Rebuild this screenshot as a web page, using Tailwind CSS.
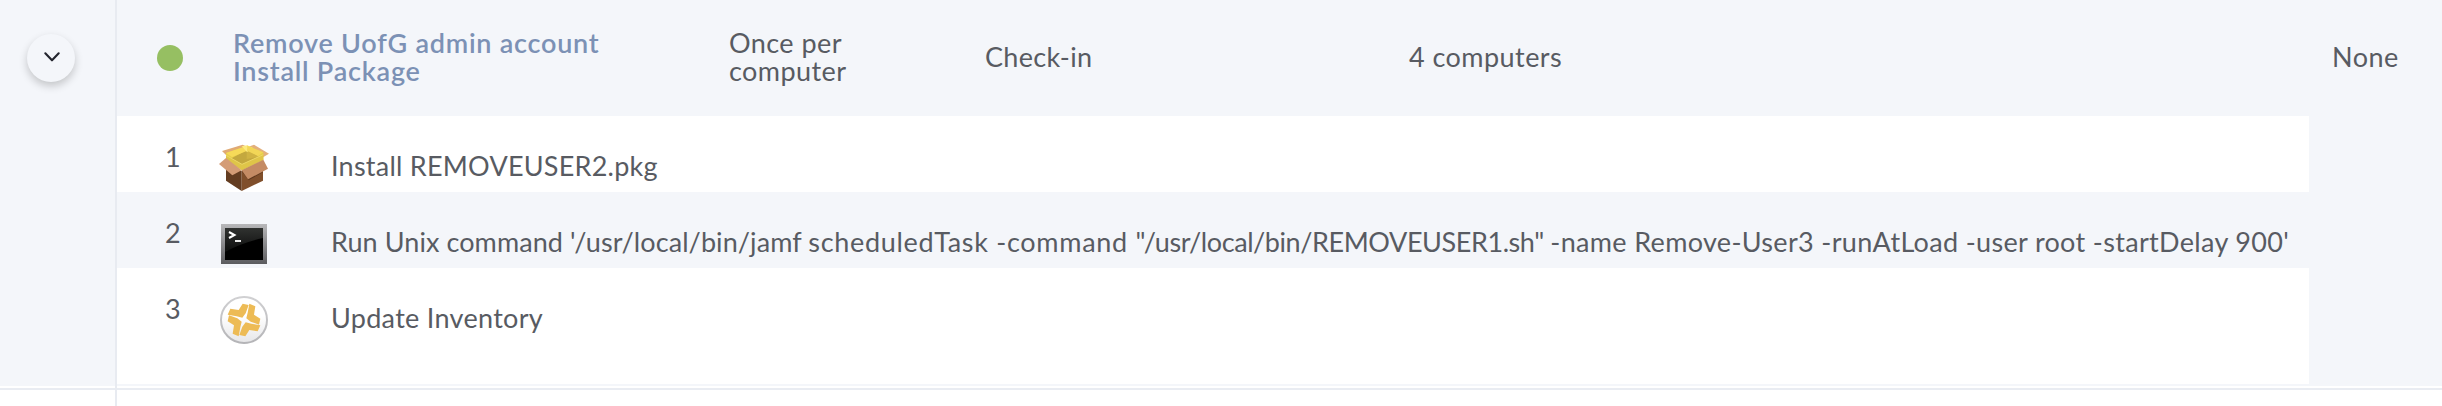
<!DOCTYPE html>
<html lang="en"><head><meta charset="utf-8"><title>Policies</title>
<script src="https://cdn.jsdelivr.net/npm/@tailwindcss/browser@4"></script></head>
<body class="bg-white text-[#585b62] text-[27px] leading-[28px] font-['Lato',sans-serif] whitespace-nowrap">
<div class="flex w-[2442px] h-[406px] overflow-hidden">
  <div class="w-[115px] shrink-0 flex flex-col">
    <div class="h-[386px] bg-[#f4f6fa] pt-[34px] pl-[27px]">
      <button class="size-12 rounded-full bg-[#f4f6fa] shadow-[0_4px_8px_rgba(0,0,0,0.2)] flex items-center justify-center">
        <svg class="w-[18px] h-3 ml-[2px] -mt-[2px]" viewBox="0 0 18 12" fill="none" stroke="#23252e" stroke-width="2.1" stroke-linecap="round" stroke-linejoin="round"><path d="M2.3 2.3 9 9.3 15.7 2.3"/></svg>
      </button>
    </div>
    <div class="h-[4px] border-b-2 border-[#e9ecf2]"></div>
  </div>
  <div class="w-[2px] shrink-0 bg-[#e8ebf1]"></div>
  <div class="grow">
    <div class="h-[116px] bg-[#f4f6fa] flex">
      <div class="w-[116px] pl-10 pt-[45px]"><div class="size-[26px] rounded-full bg-[#96bf62]"></div></div>
      <div class="w-[496px] pt-[29px] font-semibold text-[#7c91b5] tracking-[0.76px]">Remove UofG admin account<br>Install Package</div>
      <div class="w-[256px] pt-[29px] tracking-[0.43px]">Once per<br>computer</div>
      <div class="w-[424px] pt-[43px] tracking-[0.3px]">Check-in</div>
      <div class="w-[923px] pt-[43px] tracking-[0.45px]">4 computers</div>
      <div class="pt-[43px] tracking-[0.5px]">None</div>
    </div>
    <div class="flex bg-[#f4f6fa]">
      <div class="w-[2192px]">
        <div class="h-[76px] bg-white flex">
          <div class="w-[102px] pl-[48px] pt-[27px]">1</div>
          <div class="w-[112px] pt-[28px]"><svg class="w-[50px] h-[48px]" viewBox="357 102 150 144">
            <path d="M366 123 428 104 441 110 378 135Z" fill="#e0aa74"/><path d="M441 112 462 104 507 131 489 142Z" fill="#e3b07c"/>
            <path d="M378 172 425 182V243L378 212Z" fill="#643d21"/><path d="M425 182 489 165V212L425 243Z" fill="#804f2b"/><path d="M425 184 489 176 489 187 446 211Z" fill="#60391e"/>
            <path d="M378 129 442 107 490 127V150L426 181 378 150Z" fill="#e7ce4a"/><path d="M392 146 440 120 477 140 426 167Z" fill="#c4a83e"/><path d="M440 120 477 140 440 147Z" fill="#d0b343"/><path d="M378 129 442 107 460 115 396 141Z" fill="#f6da58"/><path d="M425 109 442 106 459 114 441 126Z" fill="#fdea7d"/><path d="M442 107 490 127 474 138 441 122Z" fill="#f2d657"/><path d="M378 136 426 163 490 134V150L426 181 378 150Z" fill="#dfc548"/><path d="M378 136 426 163 490 134" fill="none" stroke="#ecd766" stroke-width="3"/>
            <path d="M357 162 378 144 425 181 397 196Z" fill="#d49c76"/><path d="M425 181 490 149 504 176 444 208Z" fill="#c48b64"/></svg></div>
          <div class="pt-[36px] tracking-[0.24px]">Install REMOVEUSER2.pkg</div>
        </div>
        <div class="h-[76px] flex">
          <div class="w-[102px] pl-[48px] pt-[27px]">2</div>
          <div class="w-[112px] pt-[32px] pl-[2px]"><svg class="w-[46px] h-[40px]" viewBox="0 0 46 40">
            <defs><linearGradient id="tf" x2="0" y2="1"><stop stop-color="#b8b8ba"/><stop offset="1" stop-color="#5c5c5f"/></linearGradient><linearGradient id="ts" x2="0" y2="1"><stop stop-color="#303230"/><stop offset="1" stop-color="#0c0d0c"/></linearGradient></defs>
            <path fill="url(#tf)" d="M0 0H46V40H0Z"/><path d="M4 4H42V36H4Z" fill="#000"/><path d="M4 4H42V14Q20 19 4 28Z" fill="url(#ts)"/>
            <path d="M8 8 13.5 11 8 14" fill="none" stroke="#fff" stroke-width="2"/><path d="M14 16H20V18H14Z" fill="#e8e8e8"/></svg></div>
          <div class="pt-[36px] tracking-[0.08px]">Run Unix command '/usr/local/bin/jamf <span class="tracking-[0.7px]">scheduledTask -command </span><span class="tracking-[-0.42px]">"/usr/local/bin/REMOVEUSER1.sh" </span><span class="tracking-[0.33px]">-name Remove-User3 -runAtLoad -user root -startDelay 900'</span></div>
        </div>
        <div class="h-[116px] bg-white flex">
          <div class="w-[102px] pl-[48px] pt-[27px]">3</div>
          <div class="w-[112px] pt-[28px] pl-px"><svg class="size-12" viewBox="360 138 144 144">
            <defs><linearGradient id="ig" x2="0" y2="1"><stop offset=".4" stop-color="#fff"/><stop offset="1" stop-color="#e6e6e8"/></linearGradient><linearGradient id="ir" x2="0" y2="1"><stop stop-color="#d0d0d2"/><stop offset="1" stop-color="#b4b4b7"/></linearGradient></defs>
            <circle cx="432" cy="210" r="69" fill="url(#ig)" stroke="url(#ir)" stroke-width="6"/>
            <g fill="#edbb55"><path id="q" d="M428 161 446 165 437 190 427 203 410 199 383 194 391 176 416 180Z"/><use href="#q" transform="rotate(90 432 210)"/><use href="#q" transform="rotate(180 432 210)"/><use href="#q" transform="rotate(270 432 210)"/></g></svg></div>
          <div class="pt-[36px] tracking-[0.3px]">Update Inventory</div>
        </div>
      </div>
    </div>
    <div class="h-[2px] bg-[#f4f6fa]"></div>
    <div class="h-[4px] border-b-2 border-[#e9ecf2]"></div>
    <div class="h-4 bg-white"></div>
  </div>
</div>
</body></html>
